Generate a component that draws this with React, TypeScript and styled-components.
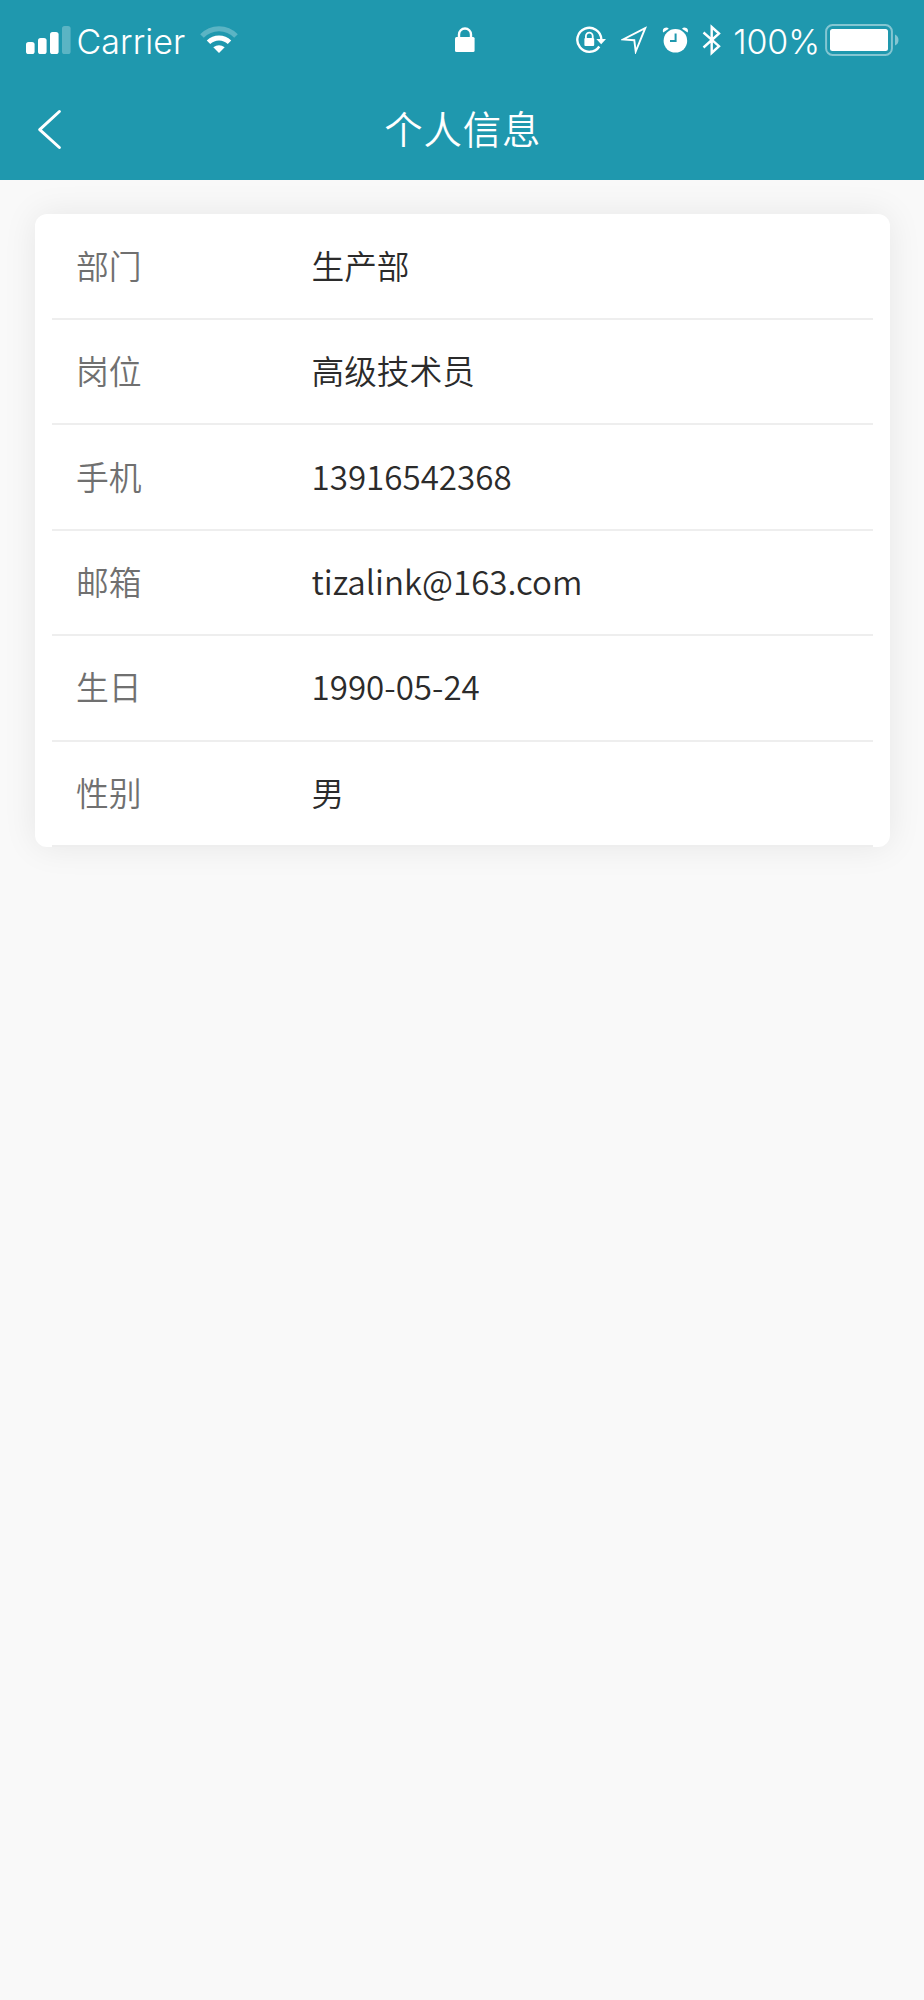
import React from 'react';
import styled, { createGlobalStyle } from 'styled-components';

const GlobalStyle = createGlobalStyle`
  * { box-sizing: border-box; }
  body {
    margin: 0;
    background: #f9f9f9;
    font-family: "Noto Sans CJK SC", sans-serif;
  }
`;

const Screen = styled.main`
  min-height: 2000px;
  background: #f9f9f9;
`;

const Header = styled.header`
  height: 180px;
  background: #1f98ae;
  color: #fff;
`;

const StatusBar = styled.div`
  display: grid;
  grid-template-columns: 429px 20px 1fr;
  align-items: center;
  height: 80px;
  padding: 0 25px 0 26px;
  font-family: Inter, sans-serif;
`;

const StatusGroup = styled.div<{ $end?: boolean }>`
  display: flex;
  align-items: center;
  justify-content: ${p => (p.$end ? 'flex-end' : 'flex-start')};
  height: 80px;
`;

const Glyph = styled.svg<{ $gap?: number }>`
  display: block;
  flex: none;
  margin-left: ${p => p.$gap ?? 0}px;
`;

const StatusText = styled.span<{ $gap: number; $tracking: number }>`
  margin-left: ${p => p.$gap}px;
  padding-top: 3px;
  font-size: 34px;
  font-weight: 350;
  line-height: 40px;
  letter-spacing: ${p => p.$tracking}px;
  white-space: nowrap;
`;

const NavBar = styled.nav`
  display: grid;
  grid-template-columns: 100px 1fr 100px;
  align-items: center;
  height: 100px;
`;

const BackButton = styled.button`
  display: flex;
  align-items: center;
  height: 100px;
  padding: 0 0 0 37px;
  border: 0;
  background: none;
  color: inherit;
`;

const Title = styled.h1`
  margin: 0;
  padding: 0 0 5px 1.5px;
  font-size: 38.4px;
  font-weight: 350;
  line-height: 95px;
  letter-spacing: 0.8px;
  text-align: center;
`;

const Card = styled.dl`
  margin: 34px 34px 0 35px;
  padding: 0.6px 17px 0;
  border-radius: 12px;
  background: #fff;
  box-shadow: 0 0 34px rgba(0, 0, 0, 0.08);
`;

const Row = styled.div`
  display: grid;
  grid-template-columns: 235.500px 1fr;
  align-items: center;
  height: 105.4px;
  padding: 0 0 3px 24px;
  border-bottom: 2px solid #eeeeee;
  font-size: 32.8px;
  line-height: 48px;
`;

const Label = styled.dt`
  color: #707070;
  font-weight: 350;
`;

const Value = styled.dd<{ $latin: boolean }>`
  margin: 0;
  color: #2b2b2b;
  font-weight: 350;
  font-size: ${p => (p.$latin ? 33.15 : 32.7)}px;
`;

const fields = [
  { label: '部门', value: '生产部' },
  { label: '岗位', value: '高级技术员' },
  { label: '手机', value: '13916542368', latin: true },
  { label: '邮箱', value: 'tizalink@163.com', latin: true },
  { label: '生日', value: '1990-05-24', latin: true },
  { label: '性别', value: '男' },
];

const Signal = () => (
  <Glyph width="45" height="30" viewBox="0 0 45 30" fill="#fff">
    <rect x="0" y="17" width="8.6" height="12" rx="2.6" />
    <rect x="12" y="13" width="8.6" height="16" rx="2.6" />
    <rect x="24" y="7" width="8.6" height="22" rx="2.6" />
    <rect x="36" y="1" width="8.6" height="28" rx="2.6" opacity="0.27" />
  </Glyph>
);

const Wifi = () => (
  <Glyph $gap={15} width="38" height="28" viewBox="0 0 38 28" fill="none" stroke="#fff">
    <path d="M2 10C11.5 .3 26.500 .3 36 10" strokeWidth="5" opacity="0.27" />
    <path d="M8.500 16.300C14.500 10.600 23.500 10.600 29.500 16.300" strokeWidth="5" />
    <path d="M13.300 21.300Q19 17 24.700 21.300L19 27Z" fill="#fff" stroke="none" />
  </Glyph>
);

const Lock = () => (
  <Glyph width="20" height="26" viewBox="0 0 20 26">
    <path d="M4 11V7.500a6 6 0 0 1 12 0V11" fill="none" stroke="#fff" strokeWidth="2.400" />
    <rect x="0" y="10" width="19.600" height="15" rx="1.500" fill="#fff" />
  </Glyph>
);

const RotationLock = () => (
  <Glyph width="30" height="28" viewBox="0 0 30 28" fill="none" stroke="#fff">
    <path d="M23.300 20.500A12 12 0 1 1 25.300 13" strokeWidth="2.400" />
    <path d="M20.300 13H30L25.200 18.200Z" fill="#fff" stroke="none" />
    <path d="M9.900 12V10a3.400 3.400 0 0 1 6.800 0V12" strokeWidth="1.800" />
    <rect x="8.400" y="12" width="9.800" height="8" rx="1" fill="#fff" stroke="none" />
  </Glyph>
);

const Location = () => (
  <Glyph $gap={15} width="27" height="28" viewBox="0 0 27 28" fill="none" stroke="#fff" strokeWidth="1.900">
    <path d="M24.200 2.200L2 13.500L13.300 14.200L14.700 25.500Z" />
  </Glyph>
);

const Alarm = () => (
  <Glyph $gap={14} width="27" height="28" viewBox="0 0 27 28">
    <circle cx="13.400" cy="14.800" r="11.800" fill="#fff" />
    <path d="M1.200 6.600Q0 3.500 2.400 2Q4.800 .5 6.800 2.700ZM25.600 6.600Q26.800 3.500 24.400 2Q22 .5 20 2.700Z" fill="#fff" />
    <path d="M13.600 7.500V15H8" fill="none" stroke="#1f98ae" strokeWidth="2" />
  </Glyph>
);

const Bluetooth = () => (
  <Glyph $gap={13} width="20" height="32" viewBox="0 0 20 32" fill="none" stroke="#fff" strokeWidth="2.400">
    <path d="M1.500 8.500L17 22.200L9.700 29V3L17 9.500L1.500 23.500" />
  </Glyph>
);

const Battery = () => (
  <Glyph $gap={5} width="74" height="32" viewBox="0 0 74 32" fill="#fff">
    <rect x="1.100" y="1.100" width="65.800" height="29.800" rx="6.500" fill="none" stroke="#fff" strokeWidth="2" opacity="0.45" />
    <rect x="5" y="5" width="58" height="22" rx="2.500" />
    <path d="M70 10.500Q73.500 12 73.500 16T70 21.500Z" opacity="0.45" />
  </Glyph>
);

export default function App() {
  return (
    <>
      <GlobalStyle />
      <Screen>
        <Header>
          <StatusBar>
            <StatusGroup>
              <Signal />
              <StatusText $gap={5.5} $tracking={0.05}>Carrier</StatusText>
              <Wifi />
            </StatusGroup>
            <Lock />
            <StatusGroup $end>
              <RotationLock />
              <Location />
              <Alarm />
              <Bluetooth />
              <StatusText $gap={11.5} $tracking={-0.1}>100%</StatusText>
              <Battery />
            </StatusGroup>
          </StatusBar>
          <NavBar>
            <BackButton aria-label="返回">
              <Glyph width="26" height="42" viewBox="0 0 26 42" fill="none" stroke="#fff" strokeWidth="3" strokeLinecap="round" strokeLinejoin="round">
                <path d="M22.400 2.500L2.700 20.700L22.400 38.500" />
              </Glyph>
            </BackButton>
            <Title>个人信息</Title>
          </NavBar>
        </Header>
        <Card>
          {fields.map(({ label, value, latin = false }) => (
            <Row key={label}>
              <Label>{label}</Label>
              <Value $latin={latin}>{value}</Value>
            </Row>
          ))}
        </Card>
      </Screen>
    </>
  );
}
